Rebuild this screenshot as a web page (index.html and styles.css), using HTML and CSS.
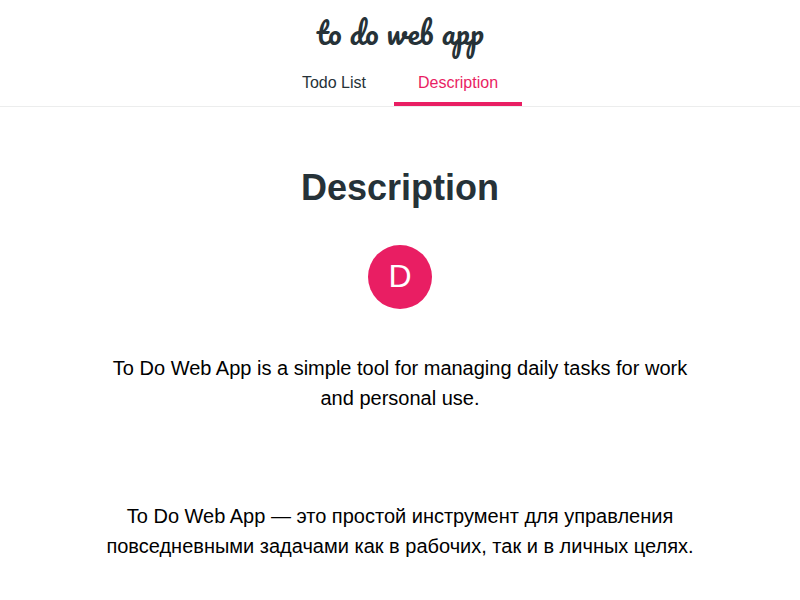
FILE: index.html
```html
<!DOCTYPE html>
<html lang="en">
<head>
<meta charset="utf-8">
<title>To do web app</title>
<link rel="stylesheet" href="styles.css">
</head>
<body>
<header class="header">
  <div class="logo">to do web app</div>
  <nav class="tabs">
    <a class="tab">Todo List</a>
    <a class="tab tab-active">Description</a>
  </nav>
</header>
<main class="content">
  <h1 class="title">Description</h1>
  <div class="avatar">D</div>
  <p class="text">To Do Web App is a simple tool for managing daily tasks for work and personal use.</p>
  <p class="text" lang="ru">To Do Web App — это простой инструмент для управления повседневными задачами как в рабочих, так и в личных целях.</p>
</main>
</body>
</html>
```
FILE: styles.css
```css
* { box-sizing: border-box; }
body {
  margin: 0;
  background: #fff;
  color: #000;
  font-family: "Liberation Sans", Arial, sans-serif;
}
.header {
  height: 107px;
  border-bottom: 1px solid #eceded;
  display: flex;
  flex-direction: column;
  align-items: center;
}
.logo {
  height: 58px;
  padding-top: 9px;
  line-height: 48px;
  font-family: Pacifico, "Brush Script MT", cursive;
  font-size: 30px;
  color: #263238;
  white-space: nowrap;
}
.tabs { display: flex; gap: 4px; height: 48px; }
.tab {
  height: 48px;
  padding: 1px 24px 0;
  line-height: 48px;
  font-size: 16px;
  color: #263238;
}
.tab-active {
  color: #e91e63;
  border-bottom: 4px solid #e91e63;
}
.content {
  display: flex;
  flex-direction: column;
  align-items: center;
}
.title {
  margin: 60px 0 0;
  font-size: 36px;
  line-height: 42px;
  color: #263238;
}
.avatar {
  width: 64px;
  height: 64px;
  margin: 36px 0 44px;
  border-radius: 50%;
  background: #e91e63;
  color: #fff;
  font-size: 32px;
  line-height: 62px;
  text-align: center;
}
.text {
  width: 600px;
  margin: 0;
  font-size: 20px;
  line-height: 30px;
  text-align: center;
}
.text + .text { margin-top: 88px; }
```
